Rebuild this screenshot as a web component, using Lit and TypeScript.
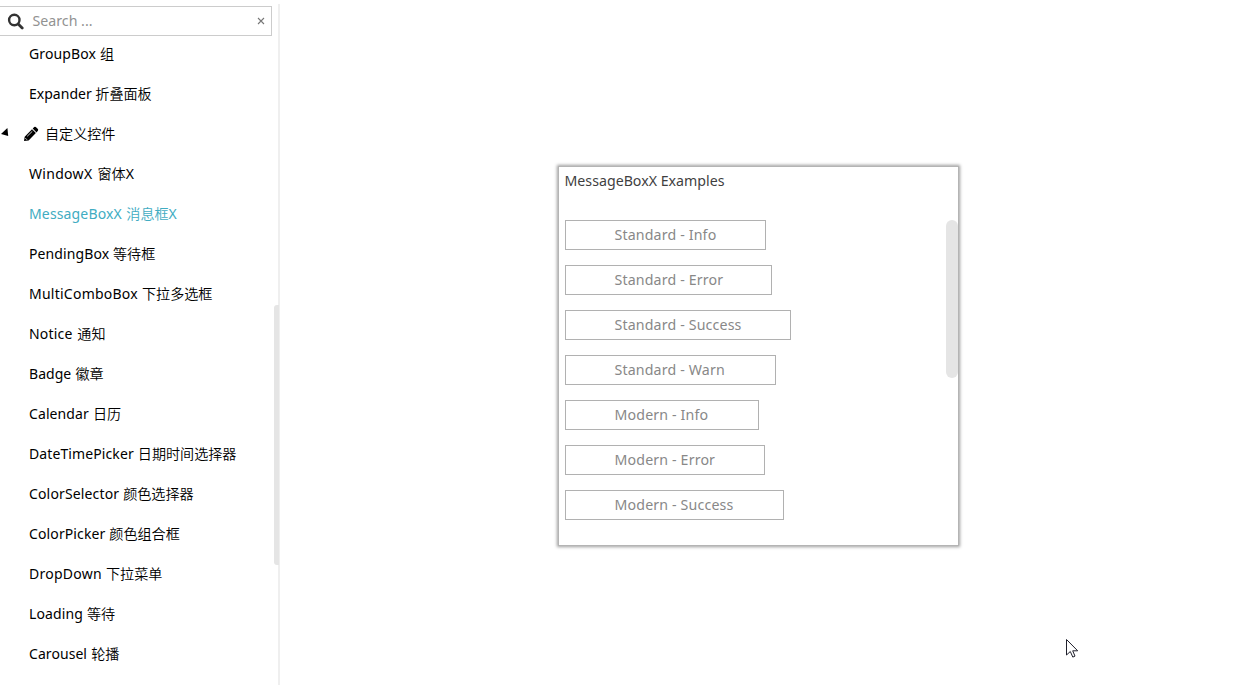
import { LitElement, html, css } from "lit";
import { customElement } from "lit/decorators.js";

interface Entry {
  name: string;
  label: string;
  width: number;
  tracking?: number;
  active?: boolean;
  suffix?: string;
}

const before: Entry[] = [
  { name: "GroupBox", label: "组", width: 71, tracking: 0.12 },
  { name: "Expander", label: "折叠面板", width: 66.3, tracking: 0.02 },
];

const after: Entry[] = [
  { name: "WindowX", label: "窗体", suffix: "X", width: 68.5, tracking: 0.3 },
  { name: "MessageBoxX", label: "消息框", suffix: "X", width: 97.3, tracking: 0.15, active: true },
  { name: "PendingBox", label: "等待框", width: 84, tracking: 0.1 },
  { name: "MultiComboBox", label: "下拉多选框", width: 113, tracking: 0.24 },
  { name: "Notice", label: "通知", width: 48.3, tracking: 0.2 },
  { name: "Badge", label: "徽章", width: 46.4, tracking: 0.04 },
  { name: "Calendar", label: "日历", width: 64, tracking: 0.1 },
  { name: "DateTimePicker", label: "日期时间选择器", width: 108.8, tracking: 0.1 },
  { name: "ColorSelector", label: "颜色选择器", width: 94.2, tracking: 0.15 },
  { name: "ColorPicker", label: "颜色组合框", width: 80.3, tracking: 0.12 },
  { name: "DropDown", label: "下拉菜单", width: 77, tracking: 0.25 },
  { name: "Loading", label: "等待", width: 58, tracking: 0.1 },
  { name: "Carousel", label: "轮播", width: 62.2, tracking: 0.06 },
];

const buttons = [
  { text: "Standard - Info", width: 201 },
  { text: "Standard - Error", width: 207 },
  { text: "Standard - Success", width: 226 },
  { text: "Standard - Warn", width: 211 },
  { text: "Modern - Info", width: 194 },
  { text: "Modern - Error", width: 200 },
  { text: "Modern - Success", width: 219 },
];

@customElement("app-root")
export class AppRoot extends LitElement {
  static styles = css`
    :host {
      display: flex;
      position: relative;
      width: 1235px;
      height: 685px;
      overflow: hidden;
      background: #fff;
      color: #000;
      font: 15px/20px "Noto Sans", "Noto Sans CJK SC", sans-serif;
    }
    * { box-sizing: border-box; }
    svg { display: block; flex: none; }
    .side {
      flex: none;
      width: 280px;
      padding-top: 6px;
      position: relative;
    }
    .rail {
      position: absolute;
      left: 278px;
      top: 4px;
      bottom: 0;
      width: 2px;
      background: #efefef;
    }
    .thumb {
      position: absolute;
      left: 274px;
      top: 305px;
      width: 5px;
      height: 260px;
      border-radius: 3px 0 0 3px;
      background: #e5e5e5;
    }
    .search {
      display: flex;
      align-items: center;
      width: 272px;
      height: 30px;
      border: 1px solid #ccc;
      border-left: 0;
      padding: 0 6px 0 7px;
      color: #929292;
    }
    .query { flex: 1; padding-left: 8.5px; font-size: 14.2px; }
    .row {
      display: flex;
      align-items: center;
      height: 40px;
      padding-left: 29px;
      white-space: nowrap;
      font-size: 14px;
    }
    .list { margin-top: -2px; }
    .row.active { color: #41acc2; }
    .row.group { padding-left: 1px; }
    .latin { flex: none; }
    .cjk {
      font-family: "Noto Sans CJK SC", sans-serif;
      font-weight: 350;
      font-size: 14.1px;
      line-height: 18px;
      padding-bottom: 2px;
    }
    .pencil { margin: 0 6px 0 14px; }
    .stage {
      flex: 1;
      display: flex;
      padding: 166px 0 0 278px;
    }
    .card {
      position: relative;
      width: 401px;
      height: 380px;
      border: 1px solid #b4b4b4;
      box-shadow: 0 0 3px 1px rgba(0, 0, 0, 0.38);
      padding: 4px 0 0 5.5px;
      background: #fff;
    }
    .title { color: #3f3f3f; font-size: 14.2px; }
    .buttons {
      display: flex;
      flex-direction: column;
      align-items: flex-start;
      gap: 15px;
      padding-top: 29px;
    }
    .button {
      height: 30px;
      line-height: 28px;
      border: 1px solid #b1b1b1;
      padding-left: 49px;
      color: #888;
      white-space: nowrap;
      font-size: 14.2px;
      letter-spacing: 0.15px;
    }
    .bar {
      position: absolute;
      right: 0;
      top: 53px;
      width: 12.5px;
      height: 158px;
      border-radius: 6.5px;
      background: #e5e5e5;
    }
    .cursor { position: absolute; left: 1066px; top: 638px; }
  `;

  private row(e: Entry) {
    return html`<div class="row ${e.active ? "active" : ""}">
      <span class="latin" style="width:${e.width}px;letter-spacing:${e.tracking ?? 0}px">${e.name}</span><span class="cjk">${e.label}</span>${e.suffix ? html`<span>${e.suffix}</span>` : ""}
    </div>`;
  }

  render() {
    return html`
      <div class="side">
        <div class="search">
          <svg width="17" height="17" viewBox="0 0 17 17" fill="none" stroke="#333">
            <circle cx="7.3" cy="7" r="5.2" stroke-width="2.4" />
            <path d="M11.2 10.9L15.2 14.9" stroke-width="2.8" stroke-linecap="round" />
          </svg>
          <span class="query">Search ...</span>
          <svg width="8" height="8" viewBox="0 0 8 8" stroke="#777" stroke-width="1.1">
            <path d="M1 1L7 7M7 1L1 7" />
          </svg>
        </div>
        <div class="list">
          ${before.map((e) => this.row(e))}
          <div class="row group">
            <svg width="8" height="12" viewBox="0 0 8 12"><path d="M0 6L6.4 0L7.2 8Z" /></svg>
            <svg class="pencil" width="16" height="16" viewBox="0 0 16 16">
              <path d="M1 15L1.7 10.7L9 3.2L12.9 7.1L5.6 14.4ZM9.7 2.5L11.2 1.1Q12 .5 12.8 1.1L14.9 3.1Q15.5 3.9 14.9 4.7L13.5 6.4Z" />
              <path d="M4.2 10.3L9.3 5.3M2.3 12.1L4 13.8" stroke="#fff" stroke-width=".8" />
            </svg>
            <span class="cjk">自定义控件</span>
          </div>
          ${after.map((e) => this.row(e))}
        </div>
        <div class="rail"></div>
        <div class="thumb"></div>
      </div>
      <div class="stage">
        <div class="card">
          <div class="title">MessageBoxX Examples</div>
          <div class="buttons">
            ${buttons.map((b) => html`<div class="button" style="width:${b.width}px">${b.text}</div>`)}
          </div>
          <div class="bar"></div>
        </div>
      </div>
      <svg class="cursor" width="13" height="20" viewBox="0 0 13 20" fill="#fff" stroke="#20202c">
        <path d="M.5 1.5V17L4.3 13.5L6.8 19.1L9 18.1L6.7 12.8H11.7Z" />
      </svg>
    `;
  }
}
